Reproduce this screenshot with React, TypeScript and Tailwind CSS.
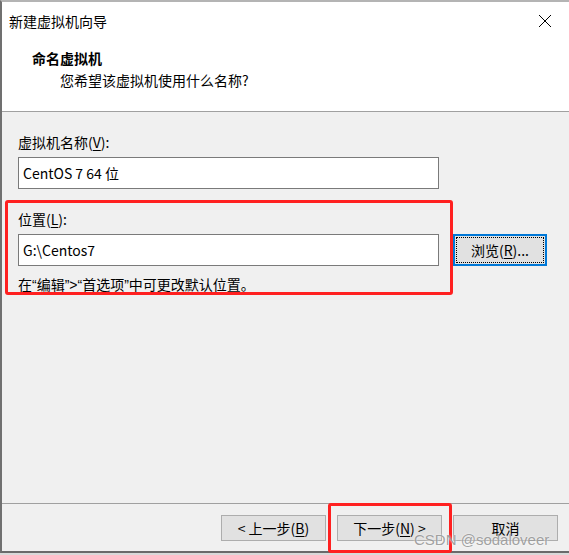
const font = { fontFamily: '"Noto Sans CJK SC", "Liberation Sans", sans-serif' };

const WinButton = ({ children, focused = false }: { children: React.ReactNode; focused?: boolean }) => (
  <div
    className={
      focused
        ? 'w-[94px] h-[32px] bg-[#e1e1e1] border-2 border-[#0078d7] p-[1px]'
        : 'w-[105px] h-[26px] bg-[#e1e1e1] border border-[#adadad]'
    }
  >
    <div
      className={
        focused
          ? 'w-full h-full border border-dotted border-black flex items-center justify-center text-[14px] text-black'
          : 'w-full h-full flex items-center justify-center text-[14px] text-black'
      }
    >
      {children}
    </div>
  </div>
);

const U = ({ c }: { c: string }) => <span className="underline underline-offset-2">{c}</span>;

// narrow (latin) quotes as in the original dialog
const Q = ({ c }: { c: string }) => (
  <span style={{ fontFamily: '"Liberation Sans", Arial, sans-serif' }}>{c}</span>
);

export default function App() {
  return (
    <div className="w-[569px] h-[555px] bg-[#d9d9d9] overflow-hidden relative leading-[20px]" style={font}>
      <div className="w-[580px] h-[553px] border-l-2 border-t-2 border-b-2 border-l-[#707070] border-t-[#b4b4b4] border-b-[#6a6a6a] bg-[#f0f0f0] flex flex-col">
        {/* title bar */}
        <div className="h-[38px] bg-white flex items-center justify-between pl-[7px] pr-[23px]">
          <span className="text-[14px] text-black">新建虚拟机向导</span>
          <svg width="14" height="14" viewBox="0 0 14 14" className="mr-[5px]">
            <path d="M1 1 L13 13 M13 1 L1 13" stroke="#000" strokeWidth="1" />
          </svg>
        </div>

        {/* header */}
        <div className="h-[72px] bg-white border-b border-[#a0a0a0] pt-[8px]">
          <div className="pl-[30px] text-[14px] font-bold text-black">命名虚拟机</div>
          <div className="pl-[58px] mt-[2px] text-[14px] text-black">您希望该虚拟机使用什么名称?</div>
        </div>

        {/* body */}
        <div className="flex-1 flex flex-col pl-[16px] pt-[20px]">
          <div className="text-[14px] text-black">
            虚拟机名称(<U c="V" />):
          </div>
          <div className="mt-[5px] w-[421px] h-[32px] bg-white border border-[#7a7a7a] flex items-center px-[4px] text-[14px] text-black">
            CentOS 7 64 位
          </div>

          <div className="mt-[20px] text-[14px] text-black">
            位置(<U c="L" />):
          </div>
          <div className="mt-[5px] flex items-center gap-[14px]">
            <div className="w-[421px] h-[32px] bg-white border border-[#7a7a7a] flex items-center px-[4px] text-[14px] text-black">
              G:\Centos7
            </div>
            <WinButton focused>
              浏览(<U c="R" />)...
            </WinButton>
          </div>
          <div className="mt-[8px] text-[14px] text-black">
            在<Q c="“" />编辑<Q c="”>“" />首选项<Q c="”" />中可更改默认位置。
          </div>
        </div>

        {/* footer */}
        <div className="h-[48px] border-t border-[#a0a0a0] flex items-start pt-[11px] pl-[219px] gap-[11px]">
          <WinButton>
            &lt; 上一步(<U c="B" />)
          </WinButton>
          <WinButton>
            下一步(<U c="N" />) &gt;
          </WinButton>
          <WinButton>取消</WinButton>
        </div>
      </div>

      {/* annotation overlays */}
      <div className="absolute left-[5px] top-[200px] w-[448px] h-[95px] border-[3px] border-[#ff2020] rounded-[3px] pointer-events-none" />
      <div className="absolute left-[328px] top-[503px] w-[124px] h-[50px] border-[3px] border-[#ff2020] rounded-[3px] pointer-events-none" />
      <div
        className="absolute left-[414px] top-[530px] text-[15px] text-[#8a8a8a]/80 leading-[20px]"
        style={{ fontFamily: '"Liberation Sans", Arial, sans-serif', textShadow: '0 0 2px #fff' }}
      >
        CSDN @sodaloveer
      </div>
    </div>
  );
}
